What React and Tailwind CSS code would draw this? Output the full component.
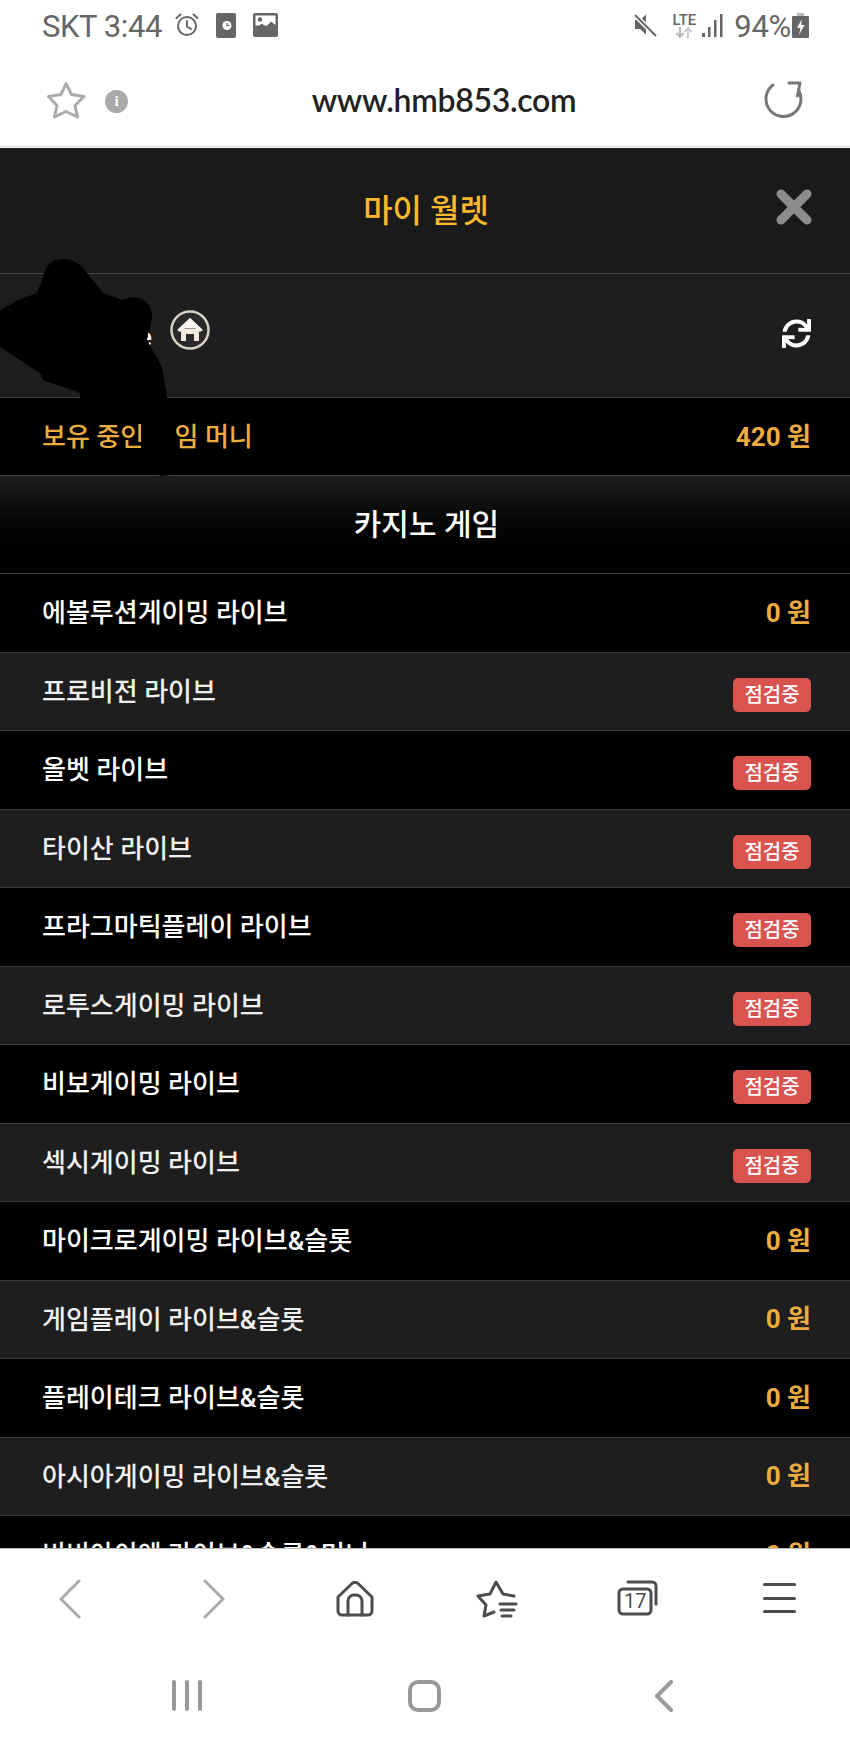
import React from "react";
import { FaSync } from "react-icons/fa";

const KR = { fontFamily: "Roboto, 'Noto Sans CJK KR', sans-serif" };

const rows = [
  ["에볼루션게이밍 라이브", "0 원"],
  ["프로비전 라이브", null],
  ["올벳 라이브", null],
  ["타이산 라이브", null],
  ["프라그마틱플레이 라이브", null],
  ["로투스게이밍 라이브", null],
  ["비보게이밍 라이브", null],
  ["섹시게이밍 라이브", null],
  ["마이크로게이밍 라이브&슬롯", "0 원"],
  ["게임플레이 라이브&슬롯", "0 원"],
  ["플레이테크 라이브&슬롯", "0 원"],
  ["아시아게이밍 라이브&슬롯", "0 원"],
  ["비비아이엔 라이브&슬롯&머니", "0 원"],
];

function Row({ name, value, odd }) {
  return (
    <div className={`h-[78.5px] shrink-0 flex items-center justify-between pl-[42px] pr-[39px] border-b border-[#3a3a3a] ${odd ? "bg-[#1e1e1e]" : "bg-black"}`}>
      <span className={`text-[26px] font-medium leading-none mt-[1px] ${odd ? "text-[#f0f0f0]" : "text-white"}`}>{name}</span>
      {value ? (
        <span className="text-[26px] font-bold leading-none text-[#ecad3f]">{value}</span>
      ) : (
        <span className="w-[78px] h-[34px] mt-[7px] rounded-[5px] bg-[#d9534f] text-white text-[20px] font-medium flex items-center justify-center leading-none">점검중</span>
      )}
    </div>
  );
}

function StatusBar() {
  return (
    <div className="h-[50px] flex items-center justify-between pl-[42px] pr-[41px] text-[#666]">
      <div className="flex items-center">
        <span className="text-[31px] leading-none tracking-[-0.4px] whitespace-nowrap mt-[2px]" style={{ fontFamily: "Roboto, sans-serif" }}>SKT 3:44</span>
        <svg width="26" height="26" viewBox="0 0 26 26" fill="none" stroke="#666" strokeWidth="2" className="ml-[12px]">
          <circle cx="13" cy="14" r="9" />
          <path d="M13 9v5.5l4 2.5M2.5 6 6.5 2.5M23.5 6 19.5 2.5" strokeLinecap="round" />
        </svg>
        <svg width="20" height="25" viewBox="0 0 20 25" className="ml-[16px]">
          <rect width="20" height="25" rx="2" fill="#666" />
          <circle cx="11" cy="12.5" r="4.5" fill="#fff" />
          <path d="M11 10v2.5h2.5" stroke="#666" strokeWidth="1.2" fill="none" />
        </svg>
        <svg width="25" height="24" viewBox="0 0 25 24" className="ml-[17px]">
          <rect width="25" height="24" rx="2" fill="#666" />
          <rect x="2.5" y="2.5" width="20" height="10" fill="#fff" />
          <circle cx="7" cy="6.5" r="2.2" fill="#666" />
          <path d="M2.500 15 9 10.500 13 14 18 8.500 22.500 12 22.500 20 2.500 20z" fill="#666" />
        </svg>
      </div>
      <div className="flex items-center">
        <svg width="24" height="26" viewBox="0 0 24 26" fill="#666">
          <path d="M1 8h5l6-5.500v20L6 17H1z" />
          <path d="M1 3 22 24" stroke="#fff" strokeWidth="5" />
          <path d="M1 3 22 24" stroke="#666" strokeWidth="2" />
        </svg>
        <div className="ml-[13px] w-[26px] flex flex-col items-center leading-none">
          <span className="text-[15px] leading-[14px] font-medium" style={{ fontFamily: "Roboto, sans-serif" }}>LTE</span>
          <svg width="18" height="11" viewBox="0 0 18 11" fill="none" strokeWidth="2">
            <path d="M5 0v9M1.500 6 5 10l3.500-4" stroke="#bbb" />
            <path d="M13 11V2M9.500 5 13 1l3.500 4" stroke="#ccc" />
          </svg>
        </div>
        <svg width="22" height="25" viewBox="0 0 22 25" fill="#666" className="ml-[5px]">
          <rect x="0" y="20" width="3" height="4" />
          <rect x="6" y="14" width="2.500" height="10" />
          <rect x="12" y="7" width="2.500" height="17" />
          <rect x="18" y="1" width="2.500" height="23" />
        </svg>
        <span className="ml-[10px] text-[31px] leading-none tracking-[-0.3px] mt-[2px]" style={{ fontFamily: "Roboto, sans-serif" }}>94%</span>
        <svg width="17" height="25" viewBox="0 0 17 25" className="ml-[1px]">
          <rect x="5" y="0" width="7" height="3" fill="#bbb" />
          <rect x="0" y="3" width="17" height="22" rx="1" fill="#666" />
          <path d="M10 6 5 15h3.500L7 22l5.500-10H9z" fill="#fff" />
        </svg>
      </div>
    </div>
  );
}

function UrlBar() {
  return (
    <div className="h-[97px] relative flex items-center justify-center border-b-[1px] border-[#d8d8d8]">
      <svg width="42" height="40" viewBox="0 0 42 40" fill="none" stroke="#aaa" strokeWidth="3" strokeLinejoin="round" className="absolute left-[46px] top-[30px]">
        <path d="M20 3.500 25.500 14.500 38 16.500 29 25.500 31.500 37 20 31.500 8.500 37 11 25.500 2.500 16.500 15 14.500z" />
      </svg>
      <div className="absolute left-[105px] top-[40px] w-[23px] h-[23px] rounded-full bg-[#aaa] flex items-center justify-center text-white text-[15px] font-bold leading-none" style={{ fontFamily: "'Liberation Serif', serif" }}>i</div>
      <span className="text-[32px] font-semibold text-[#222] leading-none ml-[38px] mt-[3px] tracking-[-0.3px]" style={{ fontFamily: "Lato, sans-serif" }}>www.hmb853.com</span>
      <svg width="40" height="40" viewBox="0 0 40 40" fill="none" stroke="#777" strokeWidth="3" strokeLinecap="round" strokeLinejoin="round" className="absolute left-[764px] top-[29px]">
        <path d="M9 6A17.500 17.500 0 1 0 35 12" />
        <path d="M25 4H36L33.500 17" />
      </svg>
    </div>
  );
}

function Blob() {
  return (
    <svg width="180" height="240" viewBox="0 0 180 240" className="absolute left-0 top-[100px] pointer-events-none">
      <path
        fill="#000"
        d="M0 62 L13 55 C20 50 30 48 37 45 L43 29 C45 18 52 11 63 11 C75 11 82 18 87 25 L103 45 L123 52 C130 48 148 46 152 65 C152 80 147 85 147 92 L162 119 L167 149 L176 170 L176 205 L170 227 L160 228 L141 205 L141 150 L80 150 L80 145 L43 132 L40 125 L0 99 Z"
      />
    </svg>
  );
}

function NavIcons() {
  const s = { fill: "none", stroke: "#4d4d4d", strokeWidth: 3, strokeLinecap: "round", strokeLinejoin: "round" };
  const g = { fill: "none", stroke: "#aaa", strokeWidth: 3, strokeLinecap: "round", strokeLinejoin: "round" };
  return (
    <div className="h-[99px] relative flex items-center justify-between">
      <svg width="24" height="40" viewBox="0 0 24 40" {...g} className="absolute left-[58px] top-[30px]"><path d="M21 2 3 20l18 18" /></svg>
      <svg width="24" height="40" viewBox="0 0 24 40" {...g} className="absolute left-[202px] top-[30px]"><path d="M3 2l18 18L3 38" /></svg>
      <svg width="38" height="38" viewBox="0 0 38 38" {...s} className="absolute left-[336px] top-[31px]">
        <path d="M2 17 16 3.500a4 4 0 0 1 6 0L36 17v14a4 4 0 0 1-4 4H6a4 4 0 0 1-4-4z" />
        <path d="M12 35V21a6 6 0 0 1 6-6h2a6 6 0 0 1 6 6v14" />
      </svg>
      <svg width="42" height="40" viewBox="0 0 42 40" {...s} className="absolute left-[476px] top-[30px]">
        <path d="M38 17 27 15 20 3 14 15 2 17 10 26 8 37 18 33" />
        <path d="M24 25H40M25 31H38M26 37H35" />
      </svg>
      <svg width="42" height="38" viewBox="0 0 42 38" {...s} className="absolute left-[617px] top-[31px]">
        <path d="M11 2h24a4 4 0 0 1 4 4v18" />
        <rect x="2" y="9" width="32" height="25" rx="4" />
      </svg>
      <span className="absolute left-[624px] top-[42px] text-[#4d4d4d] text-[20px] leading-none w-[21px] text-center" style={{ fontFamily: "Roboto, sans-serif" }}>17</span>
      <div className="absolute left-[763px] top-[34px] w-[33px] flex flex-col gap-[10.5px]">
        <div className="h-[3px] rounded-full bg-[#4d4d4d]" />
        <div className="h-[3px] rounded-full bg-[#4d4d4d]" />
        <div className="h-[3px] rounded-full bg-[#4d4d4d]" />
      </div>
    </div>
  );
}

function SystemNav() {
  return (
    <div className="h-[100px] relative">
      <div className="absolute left-[172px] top-[32px] flex gap-[9px]">
        <div className="w-[4px] h-[31px] rounded-full bg-[#999]" />
        <div className="w-[4px] h-[31px] rounded-full bg-[#999]" />
        <div className="w-[4px] h-[31px] rounded-full bg-[#999]" />
      </div>
      <div className="absolute left-[408px] top-[32px] w-[33px] h-[32px] rounded-[10px] border-[4px] border-[#999]" />
      <svg width="20" height="32" viewBox="0 0 20 32" fill="none" stroke="#999" strokeWidth="4" strokeLinecap="round" strokeLinejoin="round" className="absolute left-[654px] top-[32px]">
        <path d="M17 2 3 16l14 14" />
      </svg>
    </div>
  );
}

export default function App() {
  return (
    <div className="w-[850px] h-[1747px] flex flex-col overflow-hidden bg-white" style={KR}>
      <div className="h-[148px] shrink-0">
        <StatusBar />
        <UrlBar />
      </div>

      <div className="h-[1400px] shrink-0 overflow-hidden relative flex flex-col">
        <div className="h-[126px] shrink-0 relative bg-[#1a1a1a] border-b border-[#444] flex items-center justify-center">
          <span className="text-[32px] font-medium leading-none text-[#fbb92d] ml-[2px]">마이 월렛</span>
          <svg width="36" height="36" viewBox="0 0 36 36" className="absolute right-[38px] top-[41px]" fill="none" stroke="#8c8c8c" strokeWidth="9" strokeLinecap="round">
            <path d="M5 5 31 31M31 5 5 31" />
          </svg>
        </div>

        <div className="h-[124px] shrink-0 bg-[#1e1e1e] border-b border-[#444] flex items-center justify-between pl-[42px] pr-[39px]">
          <div className="flex items-center">
            <span className="w-[110px] text-right text-white text-[26px] font-medium leading-none mt-[2px]">e</span>
            <svg width="40" height="40" viewBox="0 0 40 40" className="ml-[18px] -mt-[11px]">
              <circle cx="20" cy="20" r="18.500" fill="#2a2a2a" stroke="#d8d2c6" strokeWidth="2.500" />
              <path d="M20 8 33 20 30 22 20 14 10 22 7 20z" fill="#f5f0e6" />
              <path d="M20 8 31 18.500H9z" fill="#fbf8f2" />
              <path d="M11 19H29V31H24V24H16V31H11z" fill="#f2ecdf" />
            </svg>
          </div>
          <FaSync className="text-white text-[29px] -mt-[5px]" />
        </div>

        <div className="h-[78px] shrink-0 bg-black border-b border-[#3a3a3a] flex items-center justify-between pl-[42px] pr-[39px]">
          <span className="text-[26px] font-medium leading-none text-[#ecad3f]">보유 중인 게임 머니</span>
          <span className="text-[26px] font-bold leading-none text-[#ecad3f]">420 원</span>
        </div>

        <div className="h-[98px] shrink-0 bg-gradient-to-b from-[#1e1e1e] to-black border-b border-[#444] flex items-center justify-center">
          <span className="text-[30px] font-medium leading-none text-white ml-[3px]">카지노 게임</span>
        </div>

        {rows.map(([name, value], i) => (
          <Row key={name} name={name} value={value} odd={i % 2 === 1} />
        ))}

        <Blob />
      </div>

      <div className="border-t border-[#bbb] shrink-0">
        <NavIcons />
        <SystemNav />
      </div>
    </div>
  );
}
